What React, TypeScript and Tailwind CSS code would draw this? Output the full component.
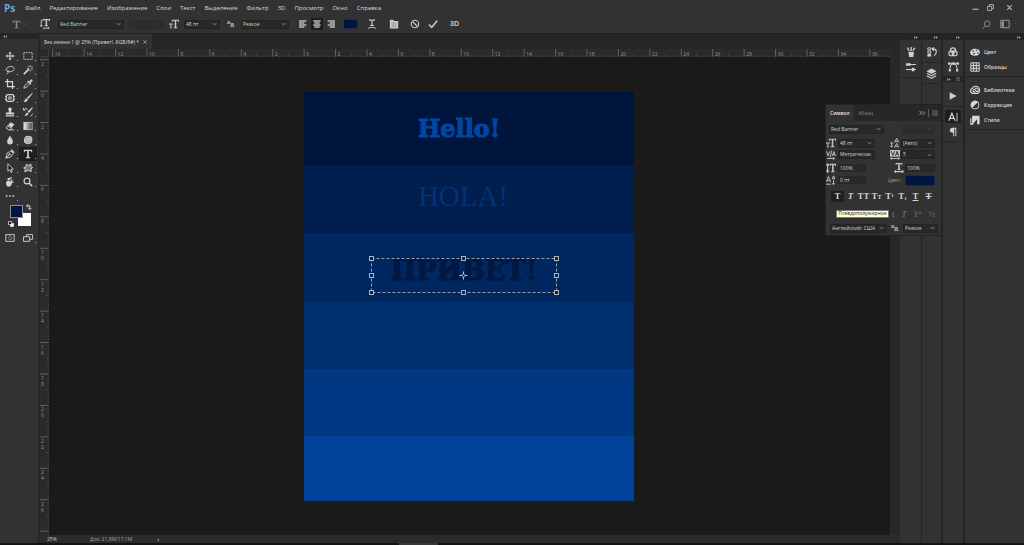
import React from "react";

type IconProps = { className?: string; children: React.ReactNode };

/** 12-unit icon grid; strokes and fills follow the current text colour. */
function Icon({ className = "size-[10px]", children }: IconProps) {
  return (
    <svg
      viewBox="0 0 12 12"
      className={`block shrink-0 ${className}`}
      fill="none"
      stroke="currentColor"
      strokeWidth="1.1"
      aria-hidden="true"
    >
      {children}
    </svg>
  );
}

function Chevron() {
  return (
    <svg
      viewBox="0 0 6 6"
      className="pointer-events-none absolute right-[2px] top-1/2 size-[5px] -translate-y-1/2"
      fill="none"
      stroke="currentColor"
      strokeWidth=".8"
      aria-hidden="true"
    >
      <path d="M.8 1.8 3 4.2 5.2 1.8" />
    </svg>
  );
}

type SelectProps = { label: string; value?: string; className: string; disabled?: boolean };

function Dropdown({ label, value, className, disabled }: SelectProps) {
  return (
    <div
      className={`relative h-[9px] shrink-0 rounded-[1px] border ${
        disabled ? "border-[#2b2b2b] bg-[#2c2c2c] text-[#4a4a4a]" : "border-[#232323] bg-[#282828] text-[#a4a4a4]"
      } ${className}`}
    >
      <select
        aria-label={label}
        disabled={disabled}
        className="block h-full w-full appearance-none bg-transparent pl-[1px] text-[5px] leading-[7px] text-[#d0d0d0] outline-none"
      >
        <option>{value ?? ""}</option>
      </select>
      <Chevron />
    </div>
  );
}

function Field({ label, value, className }: { label: string; value: string; className: string }) {
  return (
    <input
      aria-label={label}
      defaultValue={value}
      className={`h-[8px] shrink-0 border border-[#272727] bg-[#292929] pl-[1px] text-[5px] leading-[6px] text-[#d0d0d0] outline-none ${className}`}
    />
  );
}

function IconButton({
  label,
  className = "",
  children,
}: {
  label: string;
  className?: string;
  children: React.ReactNode;
}) {
  return (
    <button type="button" aria-label={label} className={`flex shrink-0 items-center justify-center ${className}`}>
      {children}
    </button>
  );
}

/* ---------- glyphs ---------- */

const FILL = { fill: "currentColor", stroke: "none" };

const BigT = <path {...FILL} d="M1 1h10v3h-.9L9.6 2.3H7v7.2l1.6.5v1H3.400v-1L5 9.500V2.300H2.400L1.900 4H1z" />;

const SizeIcon = (
  <Icon>
    <path {...FILL} d="M3.500 1H12v2.700h-.8L10.800 2.200H8.700V9.800l1.400.4v.8H5.500v-.8L6.900 9.800V2.200H4.700l-.4 1.500h-.8z" />
    <path {...FILL} d="M0 5.500h4.500v1.600H4l-.2-.7h-.9v3.800l.7.2v.6H1v-.6l.7-.2V6.400H.8l-.3.700H0z" />
  </Icon>
);

const LeadingIcon = (
  <Icon>
    <path d="M2 5v6M.5 9.400 2 11l1.500-1.600M.5 6.600 2 5l1.500 1.600" />
    <path d="M5.500 5.500 8 .5l2.500 5M6.400 4h3.200M5.500 11.500l2.500-5 2.500 5M6.400 10h3.200" />
  </Icon>
);

const KerningIcon = (
  <Icon>
    <path d="M.5 1.500 2.500 7l2-5.500M7.500 7.500l2-5.700 2 5.700M8.200 5.500h2.600M6.800.8 5 9M1 10.200h9M8.500 8.700l1.700 1.500-1.700 1.500" />
  </Icon>
);

const TrackingIcon = (
  <Icon>
    <rect {...FILL} x="0" y="0" width="12" height="8" />
    <path stroke="#2d2d2d" d="M1.500 1.300 3.500 6.500l2-5.200M6.500 6.800l2-5.300 2 5.300M7.400 5h2.400" />
    <path d="M.5 10.200h11M2 9 .6 10.200 2 11.500M10 9l1.400 1.200L10 11.500" />
  </Icon>
);

const VScaleIcon = (
  <Icon>
    <path strokeWidth="1.300" d="M2 1v10M.5 2.800 2 1l1.500 1.800M.5 9.200 2 11l1.500-1.800" />
    <path {...FILL} d="M4.500 1H12v2.700h-.8l-.4-1.400H9.200V9.800l1.200.4v.8H6.100v-.8l1.200-.4V2.300H5.700l-.4 1.400h-.8z" />
  </Icon>
);

const HScaleIcon = (
  <Icon>
    <path {...FILL} d="M2 0h8v2.600h-.8l-.4-1.300H7v6l1.200.4v.8H3.800v-.8L5 7.300v-6H3.200l-.4 1.300H2z" />
    <path strokeWidth="1.300" d="M.8 10.300h10.400M2.400 9 .9 10.300l1.500 1.300M9.600 9l1.500 1.300-1.500 1.300" />
  </Icon>
);

const BaselineIcon = (
  <Icon>
    <path d="M.5 8.500 3 2l2.500 6.500M1.400 6.500h3.200M0 11h6M7.500 5 9 1l1.500 4M8 4h2M9 6v5.500M7.700 10 9 11.500l1.300-1.500" />
  </Icon>
);

function AaIcon() {
  return (
    <span
      className="flex w-[8px] shrink-0 items-start font-['Liberation_Sans',sans-serif] font-bold leading-[8px] text-[#b8b8b8]"
      aria-hidden="true"
    >
      <span className="text-[6px] leading-[6px]">a</span>
      <span className="pt-[2px] text-[7px] leading-[8px]">a</span>
    </span>
  );
}

const TOOLS: { label: string; active?: boolean; icon: React.ReactNode }[] = [
  {
    label: "Перемещение",
    icon: (
      <path
        {...FILL}
        d="M6 .5 8 3H6.700v2.300H9V4l2.500 2L9 8V6.700H6.700V9H8l-2 2.500L4 9h1.300V6.700H3V8L.5 6 3 4v1.300h2.300V3H4z"
      />
    ),
  },
  { label: "Прямоугольная область", icon: <rect x="1" y="2" width="10" height="8" strokeDasharray="1.800 1" /> },
  {
    label: "Лассо",
    icon: <path d="M3.300 8C.2 6.800 1 3 5.500 2c4-.8 6.500 1.200 5.300 3.500C9.800 7.500 6 8.800 3.500 7.800c-1.500-.8.500-1.800.8-.3.300 1.300-1 2.300-2.500 3.300" />,
  },
  {
    label: "Волшебная палочка",
    icon: (
      <>
        <path strokeWidth="2" d="m1 11 6-6" />
        <path d="M8.500.5v2M8.500 5.500v2M5 4h2M10 4h2M6 1.500 7.200 2.700M11 1.500 9.800 2.700M11 6.500 9.900 5.400" />
      </>
    ),
  },
  { label: "Рамка", icon: <path strokeWidth="1.500" d="M3 0v9h9M0 3h9v9" /> },
  {
    label: "Пипетка",
    icon: (
      <>
        <path d="M6 4 1.800 8.300 1 11l2.700-.8L8 6" />
        <path {...FILL} d="m5 3 1.200-1.200L7.500 3l1.800-2.100c1.300-1.200 3 .5 1.800 1.800L9 4.500l1.200 1.300L9 7z" />
      </>
    ),
  },
  {
    label: "Заплатка",
    icon: (
      <>
        <rect x="1.500" y="2" width="9" height="8" rx="2" strokeWidth="1.500" />
        <rect {...FILL} x="3.500" y="4" width="5" height="4" opacity=".6" />
        <path d="M0 4h1.500M0 8h1.500M10.500 4H12M10.500 8H12" />
      </>
    ),
  },
  {
    label: "Кисть",
    icon: (
      <>
        <path {...FILL} d="M11.800.3 6.300 7.200 4.600 5.700 11 0z" />
        <path {...FILL} d="M4.300 6.300 5.800 7.700C5.300 10 3 11.300.5 10.800 2.300 10 1.800 7 4.300 6.300z" />
      </>
    ),
  },
  {
    label: "Штамп",
    icon: <path {...FILL} d="M6 .5c2.300 0 2.600 2 1.700 3.500-.5.900-.5 1.500-.2 2.500H11V9H1V6.500h3.500c.3-1 .3-1.600-.2-2.500C3.400 2.500 3.700.5 6 .5zM1 10h10v1.500H1z" />,
  },
  {
    label: "Архивная кисть",
    icon: (
      <>
        <path {...FILL} d="M12 .5 7.300 7.200 5.300 5.800 11 .2zM5 6.500l1.600 1.300C6 10 4 11 1.500 10.800 3.500 10 2.800 7.200 5 6.500z" />
        <path d="M.8 3.500C2 1.500 4.500 1.500 5.500 3M.6 1v2.700h2.700M9 11c1.500-.5 2.200-1.500 2.200-3" />
      </>
    ),
  },
  {
    label: "Ластик",
    icon: (
      <>
        <path {...FILL} d="m6.500 1.500 4.800 2.400-3 4L3.500 5.500z" />
        <path d="m3.500 5.500-2.300 3 3.200 2h2L8.300 8M3 5.800l4.600 2.500M5 10.700h6" />
      </>
    ),
  },
  {
    label: "Градиент",
    icon: (
      <>
        <defs>
          <linearGradient id="tool-gradient">
            <stop offset="0" stopColor="#f0f0f0" />
            <stop offset="1" stopColor="#444" />
          </linearGradient>
        </defs>
        <rect x="1" y="1.500" width="10" height="9" strokeWidth=".8" fill="url(#tool-gradient)" />
      </>
    ),
  },
  { label: "Размытие", icon: <path {...FILL} d="M6 .5c1 2.500 3.500 4.500 3.500 7.200a3.500 3.600 0 0 1-7 0C2.500 5 5 3 6 .5z" /> },
  {
    label: "Губка",
    icon: (
      <>
        <path {...FILL} opacity=".9" d="M3 1.500c2-1 5-1 7 .3 2 1.500 1.500 5.500.3 7.500-1.500 2-5.300 2-7.300 1C.5 9.300.5 4 3 1.500z" />
        <path stroke="#666" strokeWidth=".6" d="M3 4h2M6 3h2M4 6.500h2M7.500 6h2M5 9h2M8 8.500h1" />
      </>
    ),
  },
  {
    label: "Перо",
    icon: (
      <>
        <path d="m1 11 1.500-6L7 2.500 9.800 5 7 9.500zM1 11l4-4" />
        <circle {...FILL} cx="5.500" cy="6.300" r="1.200" />
        <path strokeWidth="1.800" d="m7.500 1 3.500 3.500" />
      </>
    ),
  },
  { label: "Горизонтальный текст", active: true, icon: BigT },
  {
    label: "Выделение контура",
    icon: <path fill="#111" d="M3.500.8v9l2.200-2 1.500 3.500L8.700 10.600 7.200 7.300H10z" />,
  },
  {
    label: "Произвольная фигура",
    icon: (
      <path
        fill="#777"
        strokeWidth="1.200"
        d="M4 1.500 6 3.200 9.500 1.200l-.2 2.600 2.200 1.500-2 2 .3 3L6.500 8.800 2 10.500l1-3L.8 6 3.500 4.500z"
      />
    ),
  },
  {
    label: "Рука",
    icon: (
      <>
        <path {...FILL} d="M2 5c2-1.500 3-.5 4 .3L8.300 3l1 1-1.800 2 2.800-.8.4 1.200-2.500 1C8 10.500 6 12 3.800 11.500 1.500 11 .5 7 2 5z" />
        <path strokeWidth="1.500" d="M4.500 3C5 1 7 .8 8.500 1.500M3.200 1.500l1.300 1.700L6.500 3" />
      </>
    ),
  },
  {
    label: "Масштаб",
    icon: (
      <>
        <circle cx="4.800" cy="4.800" r="3.500" strokeWidth="1.400" />
        <path strokeWidth="2" d="m7.500 7.500 3.500 3.500" />
      </>
    ),
  },
];

const MENU = [
  "Файл",
  "Редактирование",
  "Изображение",
  "Слои",
  "Текст",
  "Выделение",
  "Фильтр",
  "3D",
  "Просмотр",
  "Окно",
  "Справка",
];

/* ---------- top bars ---------- */

function MenuBar() {
  return (
    <header className="flex h-[15px] shrink-0 items-center bg-[#323232]">
      <span className="ml-[4px] w-[21px] text-[10px] font-bold leading-[14px] text-[#6aa5dc]">Ps</span>
      <nav className="flex gap-[9px] text-[6px] leading-[14px] text-[#dadada]">
        {MENU.map((m) => (
          <button key={m} type="button" className="whitespace-nowrap">
            {m}
          </button>
        ))}
      </nav>
      <div className="ml-auto mr-[11px] flex items-center gap-[8px] text-[#b8b8b8]">
        <IconButton label="Свернуть">
          <Icon className="size-[7px]">
            <path strokeWidth="2" d="M1 9h10" />
          </Icon>
        </IconButton>
        <IconButton label="Восстановить">
          <Icon className="size-[7px]">
            <path strokeWidth="1.500" d="M1 4h7v7H1zM4 4V1h7v7H8" />
          </Icon>
        </IconButton>
        <IconButton label="Закрыть" className="ml-[4px]">
          <Icon className="size-[7px]">
            <path strokeWidth="1.800" d="m2 2 8 8M10 2l-8 8" />
          </Icon>
        </IconButton>
      </div>
    </header>
  );
}

function OptionsBar() {
  return (
    <div className="flex h-[19px] shrink-0 items-center border-b border-[#222] bg-[#323232] text-[#c8c8c8]">
      <IconButton label="Текст" className="ml-[12px] text-[#8a8a8a]">
        <Icon className="size-[9px]">{BigT}</Icon>
      </IconButton>
      <div className="relative ml-[3px] h-[9px] w-[6px] text-[#5a5a5a]">
        <Chevron />
      </div>
      <IconButton label="Ориентация текста" className="ml-[10px] mr-[8px]">
        <Icon>
          <path d="M1.500 1v8M.2 7.300l1.300 1.700 1.300-1.700M3.500 11h7.500M9.600 9.700 11 11l-1.400 1.200" />
          <path {...FILL} d="M3 0h9v2.700h-.8l-.4-1.300H8.500v6l1.200.4v.8H5.500v-.8L6.700 7.400v-6H4.200l-.4 1.300H3z" />
        </Icon>
      </IconButton>
      <Dropdown label="Гарнитура" value="Red Banner" className="w-[66px]" />
      <Dropdown label="Начертание" className="ml-[5px] w-[34px]" disabled />
      <span className="ml-[6px] mr-[5px]">{SizeIcon}</span>
      <Dropdown label="Кегль" value="48 пт" className="w-[36px]" />
      <span className="ml-[7px] mr-[6px]">
        <AaIcon />
      </span>
      <Dropdown label="Сглаживание" value="Резкое" className="w-[48px]" />
      <div className="ml-[8px] flex gap-[2px] text-[#b8b8b8]">
        {["M0 1.500h11M0 4.500h8M0 7.500h11M0 10.500h8", "M.5 1.500h11M2 4.500h8M.5 7.500h11M2 10.500h8", "M1 1.500h11M4 4.500h8M1 7.500h11M4 10.500h8"].map(
          (d, i) => (
            <IconButton
              key={d}
              label={["По левому краю", "По центру", "По правому краю"][i]}
              className={`size-[12px] rounded-[1px] ${i === 1 ? "bg-[#1d1d1d]" : ""}`}
            >
              <Icon className="size-[8px]">
                <path strokeWidth="2" d={d} />
              </Icon>
            </IconButton>
          ),
        )}
      </div>
      <button type="button" aria-label="Цвет текста" className="ml-[6px] h-[10px] w-[15px] border border-[#1d2c4c] bg-[#001540]" />
      <IconButton label="Деформация" className="ml-[9px]">
        <Icon className="size-[10px]">
          <path {...FILL} d="M2.500 0c2 1 5 1 7 0v2.500C8.500 2 8 2.200 6.700 2.200v5l1.800.3v1h-5v-1l1.800-.3v-5C4 2.200 3.500 2 2.500 2.500z" />
          <path d="M1 11.500c2-2 7.500-2 10 0" />
        </Icon>
      </IconButton>
      <IconButton label="Панели" className="ml-[12px]">
        <Icon className="size-[10px]">
          <path {...FILL} d="M1 1h4l1 1.500h5V11.500H1z" />
          <path stroke="#777" strokeWidth=".7" d="M3 5h6M3 7h6M3 9h6" />
        </Icon>
      </IconButton>
      <IconButton label="Отмена" className="ml-[11px]">
        <Icon className="size-[10px]">
          <circle cx="6" cy="6" r="4.500" strokeWidth="1.400" />
          <path strokeWidth="1.400" d="m3 3 6 6" />
        </Icon>
      </IconButton>
      <IconButton label="Применить" className="ml-[8px]">
        <Icon className="size-[10px]">
          <path strokeWidth="1.800" d="m1 6.500 3.500 3.500L11 2" />
        </Icon>
      </IconButton>
      <button type="button" className="ml-[12px] font-['Liberation_Sans',sans-serif] text-[7px] font-bold leading-[12px]">
        3D
      </button>
      <div className="ml-auto mr-[3px] flex items-center gap-[9px] text-[#a0a0a0]">
        <IconButton label="Поиск">
          <Icon className="size-[9px]">
            <circle cx="7" cy="5" r="3.800" />
            <path d="m4.200 7.800-3.500 3.500" />
          </Icon>
        </IconButton>
        <IconButton label="Рабочая среда">
          <Icon className="size-[10px]">
            <path d="M1 1.500h10v9H1z" />
            <path {...FILL} d="M2 3h2.500v6.500H2z" />
          </Icon>
        </IconButton>
        <div className="relative -ml-[4px] h-[9px] w-[6px] text-[#555]">
          <Chevron />
        </div>
      </div>
    </div>
  );
}

/* ---------- tools ---------- */

function ToolBar() {
  return (
    <aside className="flex w-[40px] shrink-0 flex-col border-r-2 border-[#272727] bg-[#323232] text-[#d2d2d2]">
      <div className="flex h-[5px] items-center bg-[#242424] pl-[3px] text-[#8a8a8a]">
        <Arrows left />
      </div>
      <div className="mt-[10px] grid grid-cols-2 pl-[1px] pr-[1px]">
        {TOOLS.map((t) => (
          <IconButton
            key={t.label}
            label={t.label}
            className={`relative h-[14px] rounded-[1px] ${t.active ? "bg-[#1e1e1e]" : ""}`}
          >
            <Icon>{t.icon}</Icon>
            <span className="absolute bottom-[2px] right-[1px] size-[1px] bg-[#aaa]" />
          </IconButton>
        ))}
        <IconButton label="Изменить панель" className="relative h-[13px]">
          <Icon>
            <path {...FILL} d="M1 5h2v2H1zM5 5h2v2H5zM9 5h2v2H9z" />
          </Icon>
          <span className="absolute bottom-[1px] right-[1px] size-[1px] bg-[#aaa]" />
        </IconButton>
      </div>
      <div className="relative ml-[8px] mt-[1px] h-[26px] w-[26px]">
        <button type="button" aria-label="Фоновый цвет" className="absolute left-[10px] top-[10px] size-[13px] bg-white" />
        <button
          type="button"
          aria-label="Основной цвет"
          className="absolute left-[2px] top-[2px] size-[13px] border border-[#8a8f98] bg-[#001540]"
        />
        <svg viewBox="0 0 6 6" className="absolute left-[18px] top-[1px] size-[6px]" fill="none" stroke="currentColor">
          <path d="M.5 1.800h3.300v3.500M2 .3.500 1.800 2 3.300M2.500 4 3.900 5.500 5.300 4" />
        </svg>
        <svg viewBox="0 0 6 6" className="absolute left-0 top-[18px] size-[6px]" stroke="#ddd" strokeWidth=".8">
          <path fill="#fff" d="M2.500 2.500h3v3h-3z" />
          <path fill="#111" d="M.5.5h3v3h-3z" />
        </svg>
      </div>
      <div className="mt-[2px] grid grid-cols-2 pl-[1px] pr-[1px]">
        <IconButton label="Быстрая маска" className="h-[13px]">
          <Icon>
            <rect x="1" y="2" width="10" height="8" />
            <circle cx="6" cy="6" r="2" strokeDasharray="1 .8" />
          </Icon>
        </IconButton>
        <IconButton label="Режим экрана" className="relative h-[13px]">
          <Icon>
            <path d="M4 2h7.500v5.500H4z" />
            <path fill="#323232" d="M.6 4.500h7.400v5.500H.6z" />
          </Icon>
          <span className="absolute bottom-[1px] right-[1px] size-[1px] bg-[#aaa]" />
        </IconButton>
      </div>
    </aside>
  );
}

function Arrows({ left }: { left?: boolean }) {
  return (
    <svg viewBox="0 0 8 6" className="h-[3px] w-[4px]" fill="currentColor" aria-hidden="true">
      <path d={left ? "M4 0v6L0 3zM8 0v6L4 3z" : "M0 0v6l4-3zM4 0v6l4-3z"} />
    </svg>
  );
}

/* ---------- document ---------- */

const STEP = 31.43;
const range = (n: number) => Array.from({ length: n }, (_, i) => i);

function TopRuler() {
  const origin = 3.700;
  return (
    <svg className="block h-[8px] w-full bg-[#2a2a2a]" aria-hidden="true">
      {range(27).map((i) => {
        const x = origin + i * STEP;
        return (
          <g key={i}>
            <path
              stroke="#5c5c5c"
              strokeWidth=".6"
              d={range(9)
                .map((k) => `M${x + ((k + 1) * STEP) / 10} 8v${k === 4 ? -3 : -1.500}`)
                .join("")}
            />
            <path stroke="#707070" strokeWidth=".8" d={`M${x} 0v8`} />
            <text x={x + 2} y="6.500" fontSize="5" fill="#959595">
              {Math.abs(i * 2 - 16)}
            </text>
          </g>
        );
      })}
    </svg>
  );
}

function SideRuler() {
  const origin = 2.700;
  return (
    <svg className="block h-full w-[9px] shrink-0 bg-[#2a2a2a]" aria-hidden="true">
      {range(16).map((i) => {
        const y = origin + i * STEP;
        return (
          <g key={i}>
            <path
              stroke="#5c5c5c"
              strokeWidth=".6"
              d={range(9)
                .map((k) => `M9 ${y + ((k + 1) * STEP) / 10}h${k === 4 ? -3 : -1.500}`)
                .join("")}
            />
            <path stroke="#707070" strokeWidth=".8" d={`M0 ${y}h9`} />
            {i < 15 &&
              String(Math.abs(i * 2 - 2))
                .split("")
                .map((c, k) => (
                  <text key={k} x="1" y={y + 6 + k * 6} fontSize="5" fill="#959595">
                    {c}
                  </text>
                ))}
          </g>
        );
      })}
    </svg>
  );
}

const HANDLES = [
  "-left-[2px] -top-[2px]",
  "left-[90px] -top-[2px]",
  "-right-[2px] -top-[2px]",
  "-left-[2px] top-[15px]",
  "-right-[2px] top-[15px]",
  "-left-[2px] -bottom-[2px]",
  "left-[90px] -bottom-[2px]",
  "-right-[2px] -bottom-[2px]",
];

function Artboard() {
  return (
    <div className="flex w-[330px] shrink-0 flex-col text-center">
      <div className="h-[73px] bg-[#00153c] pt-[22px] pr-[20px] font-['DejaVu_Serif',serif] text-[24px] font-bold leading-[30px] text-[#0046a3] [-webkit-text-stroke:1px_#0046a3]">
        Hello!
      </div>
      <div className="h-[68px] bg-[#001e4e] pt-[14px] pr-[12px] font-['Liberation_Serif',serif] text-[29px] leading-[34px] text-[#00337a]">
        HOLA!
      </div>
      <div className="h-[69px] bg-[#002760] pl-[67px] pt-[25px]">
        <div className="relative h-[35px] w-[186px] font-['DejaVu_Serif',serif] text-[27px] font-bold leading-[26px] text-[#001842] [-webkit-text-stroke:1px_#001842]">
          ПРИВЕТ!
          <svg className="absolute inset-0 size-full" fill="none" aria-hidden="true">
            <path stroke="#9aa0a8" strokeDasharray="3 2" d="M.5.5h185v34H.5z" />
            <g transform="translate(92.500 17.500)" stroke="#c5c8cc">
              <path d="M-4 0h2.500M1.500 0H4M0-4v2.500M0 1.500V4" />
              <circle r="1.500" strokeWidth=".7" />
            </g>
          </svg>
          {HANDLES.map((h) => (
            <span key={h} className={`absolute size-[5px] border border-[#b4b4b4] bg-[#002760] ${h}`} />
          ))}
        </div>
      </div>
      <div className="h-[67px] bg-[#002f70]" />
      <div className="h-[67px] bg-[#003883]" />
      <div className="h-[65px] bg-[#004299]" />
    </div>
  );
}

function Document() {
  return (
    <main className="flex min-w-0 flex-1 flex-col bg-[#282828]">
      <div className="flex h-[15px] shrink-0 bg-[#262626]">
        <div className="flex items-center gap-[4px] bg-[#323232] pl-[4px] pr-[5px] text-[5px] leading-[8px] text-[#dcdcdc]">
          <span className="whitespace-nowrap">Без имени-1 @ 25% (Привет!, RGB/8#) *</span>
          <IconButton label="Закрыть документ" className="text-[#9a9a9a]">
            <Icon className="size-[4px]">
              <path strokeWidth="2.500" d="m1 1 10 10M11 1 1 11" />
            </Icon>
          </IconButton>
        </div>
      </div>
      <div className="flex min-h-0 flex-1">
        <div className="flex min-w-0 flex-1 flex-col">
          <div className="flex h-[8px] shrink-0">
            <div className="w-[9px] shrink-0 border-b border-r border-[#3c3c3c] bg-[#2a2a2a]" />
            <TopRuler />
          </div>
          <div className="flex min-h-0 flex-1">
            <SideRuler />
            <div className="flex min-w-0 flex-1 items-start overflow-hidden bg-[#1a1a1a] pl-[255px] pt-[35px]">
              <Artboard />
            </div>
          </div>
        </div>
        <div className="w-[10px] shrink-0 bg-[#282828]" />
      </div>
      <footer className="flex h-[8px] shrink-0 items-center bg-[#2b2b2b] pl-[7px] text-[5px] leading-[8px] text-[#d0d0d0]">
        <span className="w-[43px]">25%</span>
        <span className="w-[67px] text-[#a0a0a0]">Док: 21,8M/17,1M</span>
        <span className="text-[8px]">›</span>
      </footer>
    </main>
  );
}

/* ---------- docks ---------- */

function DockHeader() {
  return (
    <div className="flex h-[6px] shrink-0 items-center justify-end bg-[#242424] pr-[3px] text-[#909090]">
      <Arrows />
    </div>
  );
}

const rowCls = "h-[15px] w-full";

function IconDocks() {
  return (
    <>
      <div className="flex w-[22px] shrink-0 flex-col border-r border-[#242424] bg-[#323232]">
        <DockHeader />
        <div className="flex flex-col border-b border-[#262626] pb-[3px] pt-[4px]">
          <IconButton label="Наборы кистей" className={rowCls}>
            <Icon>
              <path {...FILL} d="M3 6h6.500l-.7 6H3.700zM5.300 0h1.600v5H5.300zM1 1l1.500-.7L4.500 5H3zM9.500.5l1.800.8L8.800 5H7.500z" />
            </Icon>
          </IconButton>
          <IconButton label="Параметры кисти" className={rowCls}>
            <Icon>
              <path strokeWidth="1.300" d="M0 3h12M0 9h12" />
              <path {...FILL} d="M0 1.500h5.500v3H0zM7 7h3v4H7z" />
            </Icon>
          </IconButton>
        </div>
      </div>
      <div className="flex w-[21px] shrink-0 flex-col border-r-2 border-[#242424] bg-[#323232]">
        <DockHeader />
        <div className="border-b border-[#262626] pb-[3px] pt-[4px]">
          <IconButton label="История" className={rowCls}>
            <Icon>
              <path d="M1 1h3.500v2.500H1zM1 5h3.500v2.500H1z" />
              <path {...FILL} d="M.5 8.500H5V11.500H.5z" />
              <path strokeWidth="1.400" d="M6.500 2.500h2c3.500 0 3.500 6 0 8M8.300.5l-2 2 2 2" />
            </Icon>
          </IconButton>
        </div>
        <div className="border-b border-[#262626] pb-[2px] pt-[3px]">
          <IconButton label="Слои" className={rowCls}>
            <Icon className="size-[11px]">
              <path {...FILL} d="m6 .5 5.500 3L6 6.500.5 3.500zM1.800 5.500 6 7.800l4.200-2.300 1.300.8L6 9.300.5 6.300z" />
              <path {...FILL} d="M1.800 8.300 6 10.600l4.200-2.300 1.300.7L6 12 .5 9z" />
            </Icon>
          </IconButton>
        </div>
      </div>
      <div className="flex w-[22px] shrink-0 flex-col border-r-2 border-[#242424] bg-[#323232]">
        <DockHeader />
        <div className="pb-[2px] pt-[4px]">
          <IconButton label="Каналы" className={rowCls}>
            <Icon>
              <circle cx="6" cy="4" r="3" strokeWidth="1.400" />
              <circle cx="4" cy="7.500" r="3" strokeWidth="1.400" />
              <circle cx="8" cy="7.500" r="3" strokeWidth="1.400" />
            </Icon>
          </IconButton>
          <IconButton label="Контуры" className={rowCls}>
            <Icon className="size-[11px]">
              <path d="M2 10c0-4 1-7 4-7s4 3 4 7M1.500 2.500h9" />
              <path {...FILL} d="M0 1.500h2.500V4H0zM4.700 1.500h2.600V4H4.700zM9.500 1.500H12V4H9.500zM.8 9h2.400v2.500H.8zM8.800 9h2.400v2.500H8.800z" />
            </Icon>
          </IconButton>
        </div>
        <div className="flex h-[6px] items-center justify-between bg-[#242424] pl-[4px] pr-[3px] text-[#909090]">
          <Arrows />
          <Lines className="size-[4px]" />
        </div>
        <div className="border-b border-[#262626] pb-[3px] pt-[6px]">
          <IconButton label="Операции" className={rowCls}>
            <Icon>
              <path {...FILL} d="M2 1.500 10.500 6 2 10.500z" />
            </Icon>
          </IconButton>
        </div>
        <div className="border-b border-[#262626] pb-[2px] pt-[2px]">
          <IconButton label="Символ" className={rowCls}>
            <span className="flex h-[13px] w-[16px] items-center justify-center bg-[#1e1e1e]">
              <Icon>
                <path strokeWidth="1.500" d="m1 10.500 3.700-9 3.700 9M2.400 7.500H7" />
                <path d="M10.800 1v10.500" />
              </Icon>
            </span>
          </IconButton>
          <IconButton label="Абзац" className={rowCls}>
            <Icon>
              <path {...FILL} d="M5.500 1H10v10H8.800V2H7.500v9H6.300V7C1 7.500 1 1 5.500 1z" />
            </Icon>
          </IconButton>
        </div>
      </div>
    </>
  );
}

function Lines({ className }: { className: string }) {
  return (
    <Icon className={className}>
      <path strokeWidth="1.500" d="M0 2h12M0 6h12M0 10h12" />
    </Icon>
  );
}

const PANELS: { label: string; icon: React.ReactNode }[][] = [
  [
    {
      label: "Цвет",
      icon: (
        <>
          <path {...FILL} d="M6 2c3 0 5.800 1.300 5.800 4S9 10.500 6 10.500.2 9 .2 6.500 3 2 6 2z" />
          <path stroke="#323232" strokeWidth="1.500" d="M3 5h2M7 4h1.500M4 8h2M8.500 7h1.500" />
        </>
      ),
    },
    { label: "Образцы", icon: <path strokeWidth="1.200" d="M1 1h10v10H1zM1 4.300h10M1 7.600h10M4.300 1v10M7.600 1v10" /> },
  ],
  [
    {
      label: "Библиотеки",
      icon: (
        <>
          <path strokeWidth="1.300" d="M4 10C1.500 10 .6 8.500.6 7s1-2.600 2.300-2.700C3.300 2.500 5 1.500 7 1.500c2.500 0 4.400 2 4.400 4.300S10 10 8 10z" />
          <path strokeWidth="1.300" d="M6.500 8C5 8.500 3.500 8 3.500 6.700c0-1.500 2-1.700 3-.5l1.500 1.500c1.500.5 2-.5 2-1.500C10 3.500 7 3 6 4.500" />
        </>
      ),
    },
    {
      label: "Коррекция",
      icon: (
        <>
          <circle cx="6" cy="6" r="4.800" />
          <path {...FILL} d="M9.400 2.600 2.600 9.400A4.800 4.800 0 0 1 9.400 2.600z" />
        </>
      ),
    },
    {
      label: "Стили",
      icon: (
        <>
          <path {...FILL} d="M2.500 1H11.500v10h-3V5L4 9.500 2.500 8z" />
          <path strokeWidth="1.300" d="M1 11c2.500-.5 4-2 5-5M1 4v7h3" />
        </>
      ),
    },
  ],
];

function PanelDock() {
  return (
    <aside className="flex w-[59px] shrink-0 flex-col bg-[#323232]">
      <DockHeader />
      {PANELS.map((group, i) => (
        <div key={i} className={`border-b border-[#262626] pb-[2px] ${i === 0 ? "pt-[4px]" : "pt-[5px]"}`}>
          {group.map((p) => (
            <button
              key={p.label}
              type="button"
              className="flex h-[15px] w-full items-center gap-[4px] pl-[5px] text-[5px] font-semibold leading-[8px] text-[#d8d8d8]"
            >
              <Icon>{p.icon}</Icon>
              {p.label}
            </button>
          ))}
        </div>
      ))}
    </aside>
  );
}

/* ---------- character panel ---------- */

const STYLE_GLYPHS: { label: string; text: React.ReactNode; active?: boolean; cls?: string }[] = [
  { label: "Псевдополужирное", text: "T", active: true, cls: "font-bold" },
  { label: "Псевдокурсивное", text: "T", cls: "italic" },
  { label: "Все прописные", text: "TT" },
  { label: "Капители", text: <>T<small className="text-[6px]">T</small></> },
  { label: "Надстрочный", text: <>T<sup className="text-[5px]">1</sup></> },
  { label: "Подстрочный", text: <>T<sub className="text-[5px]">1</sub></> },
  { label: "Подчеркнутый", text: "T", cls: "underline" },
  { label: "Зачеркнутый", text: "T", cls: "line-through" },
];

function CharacterPanel() {
  return (
    <section className="absolute right-[82px] top-[104px] w-[117px] border border-[#232323] bg-[#323232] text-[5px] leading-[8px] text-[#c4c4c4]">
      <div className="flex h-[16px] bg-[#272727]">
        <button type="button" className="bg-[#323232] px-[4px] font-semibold text-[#e0e0e0]">
          Символ
        </button>
        <button type="button" className="px-[5px] text-[#8c8c8c]">
          Абзац
        </button>
        <div className="ml-auto mr-[3px] flex items-center gap-[3px]">
          <Icon className="size-[6px]">
            <path strokeWidth="1.500" d="m1 2 4 4-4 4M7 2l4 4-4 4" />
          </Icon>
          <span className="h-[8px] w-[1px] bg-[#606060]" />
          <Lines className="size-[6px] text-[#888]" />
        </div>
      </div>
      <div className="flex h-[16px] items-center pl-[3px]">
        <Dropdown label="Семейство шрифтов" value="Red Banner" className="w-[55px]" />
        <Dropdown label="Начертание шрифта" className="ml-[18px] w-[33px]" disabled />
      </div>
      <div className="flex h-[12px] items-center">
        {SizeIcon}
        <Dropdown label="Кегль символа" value="48 пт" className="ml-[2px] w-[37px]" />
        <span className="ml-[15px] mr-[1px]">{LeadingIcon}</span>
        <Dropdown label="Интерлиньяж" value="(Авто)" className="w-[34px]" />
      </div>
      <div className="flex h-[11px] items-center">
        {KerningIcon}
        <Dropdown label="Кернинг" value="Метрически" className="ml-[2px] w-[37px]" />
        <span className="ml-[15px] mr-[1px]">{TrackingIcon}</span>
        <Dropdown label="Трекинг" value="5" className="w-[34px]" />
      </div>
      <div className="mt-[2px] flex h-[12px] items-center">
        {VScaleIcon}
        <Field label="Масштаб по вертикали" value="100%" className="ml-[2px] w-[28px]" />
        <span className="ml-[28px] mr-[1px]">{HScaleIcon}</span>
        <Field label="Масштаб по горизонтали" value="100%" className="w-[30px]" />
      </div>
      <div className="flex h-[12px] items-center">
        {BaselineIcon}
        <Field label="Смещение базовой линии" value="0 пт" className="ml-[2px] w-[28px]" />
        <span className="ml-[22px] w-[17px] text-[#999]">Цвет:</span>
        <button type="button" aria-label="Цвет" className="h-[11px] w-[30px] border border-[#1d2c4c] bg-[#001540]" />
      </div>
      <div className="flex h-[20px] items-center pl-[5px] pr-[8px] font-['Liberation_Serif',serif] text-[9px] font-bold leading-[10px] text-[#d0d0d0]">
        {STYLE_GLYPHS.map((g) => (
          <IconButton key={g.label} label={g.label} className={`h-[11px] w-[13px] ${g.active ? "bg-[#1f1f1f]" : ""}`}>
            <span className={g.cls}>{g.text}</span>
          </IconButton>
        ))}
      </div>
      <div className="flex h-[15px] items-center pl-[10px] pr-[6px]">
        <span
          role="tooltip"
          className="flex h-[8px] w-[53px] items-center justify-center whitespace-nowrap border border-[#777] bg-[#ffffd8] text-[5px] leading-[7px] text-[#222]"
        >
          Псевдополужирное
        </span>
        <div className="flex flex-1 justify-between pl-[3px] font-['Liberation_Serif',serif] text-[9px] leading-[10px] text-[#7c7c7c]">
          <span>t</span>
          <span className="italic">T</span>
          <span>1<sup className="text-[5px]">st</sup></span>
          <span>½</span>
        </div>
      </div>
      <div className="flex h-[14px] items-center pl-[4px]">
        <Dropdown label="Язык" value="Английский: США" className="w-[57px]" />
        <span className="ml-[4px] mr-[4px]">
          <AaIcon />
        </span>
        <Dropdown label="Сглаживание символов" value="Резкое" className="w-[35px]" />
      </div>
    </section>
  );
}

export default function App() {
  return (
    <div className="relative flex h-screen flex-col overflow-hidden bg-[#282828] font-['Open_Sans','Noto_Sans',sans-serif]">
      <MenuBar />
      <OptionsBar />
      <div className="flex min-h-0 flex-1 text-[#d0d0d0]">
        <ToolBar />
        <Document />
        <IconDocks />
        <PanelDock />
      </div>
      <div className="flex h-[2px] shrink-0 bg-[#141414]">
        <div className="ml-[39%] w-[39px] bg-[#3a3a3a]" />
      </div>
      <CharacterPanel />
    </div>
  );
}
